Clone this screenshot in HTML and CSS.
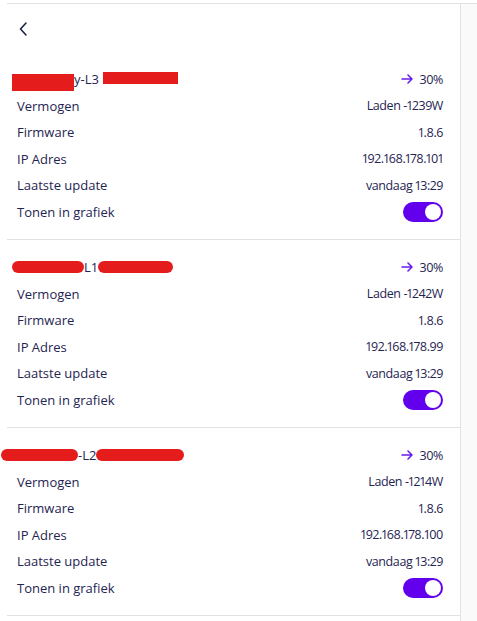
FILE: index.html
```html
<!DOCTYPE html>
<html lang="nl">
<head>
  <meta charset="UTF-8">
  <title>Omvormers</title>
  <link rel="stylesheet" href="styles.css">
</head>
<body>
  <div class="frame">
    <div class="main">
      <div class="header">
        <svg class="back" width="12" height="16" viewBox="0 0 12 16">
          <path d="M8 2 L2.5 8 L8 14" fill="none" stroke="#1c2340" stroke-width="1.6" stroke-linecap="round" stroke-linejoin="round"/>
        </svg>
      </div>

      <!-- L3 -->
      <div class="device">
        <div class="row title-row">
          <div class="name">
            <span class="redact r1a"></span><span class="name-text">y-L3</span><span class="redact r1b"></span>
          </div>
          <div class="soc">
            <svg width="13" height="12" viewBox="0 0 13 12"><path d="M1 6 H11 M7 2 L11 6 L7 10" fill="none" stroke="#6a1bf0" stroke-width="1.6" stroke-linecap="round" stroke-linejoin="round"/></svg>
            <span class="val">30%</span>
          </div>
        </div>
        <div class="row"><span>Vermogen</span><span class="val">Laden -1239W</span></div>
        <div class="row"><span>Firmware</span><span class="val">1.8.6</span></div>
        <div class="row"><span>IP Adres</span><span class="val">192.168.178.101</span></div>
        <div class="row"><span>Laatste update</span><span class="val">vandaag 13:29</span></div>
        <div class="row"><span>Tonen in grafiek</span><span class="toggle on"><span class="knob"></span></span></div>
      </div>

      <!-- L1 -->
      <div class="device">
        <div class="row title-row">
          <div class="name">
            <span class="redact pill r2a"></span><span class="name-text">L1</span><span class="redact pill r2b"></span>
          </div>
          <div class="soc">
            <svg width="13" height="12" viewBox="0 0 13 12"><path d="M1 6 H11 M7 2 L11 6 L7 10" fill="none" stroke="#6a1bf0" stroke-width="1.6" stroke-linecap="round" stroke-linejoin="round"/></svg>
            <span class="val">30%</span>
          </div>
        </div>
        <div class="row"><span>Vermogen</span><span class="val">Laden -1242W</span></div>
        <div class="row"><span>Firmware</span><span class="val">1.8.6</span></div>
        <div class="row"><span>IP Adres</span><span class="val">192.168.178.99</span></div>
        <div class="row"><span>Laatste update</span><span class="val">vandaag 13:29</span></div>
        <div class="row"><span>Tonen in grafiek</span><span class="toggle on"><span class="knob"></span></span></div>
      </div>

      <!-- L2 -->
      <div class="device">
        <div class="row title-row">
          <div class="name flush">
            <span class="redact pill r3a"></span><span class="name-text">-L2</span><span class="redact pill r3b"></span>
          </div>
          <div class="soc">
            <svg width="13" height="12" viewBox="0 0 13 12"><path d="M1 6 H11 M7 2 L11 6 L7 10" fill="none" stroke="#6a1bf0" stroke-width="1.6" stroke-linecap="round" stroke-linejoin="round"/></svg>
            <span class="val">30%</span>
          </div>
        </div>
        <div class="row"><span>Vermogen</span><span class="val">Laden -1214W</span></div>
        <div class="row"><span>Firmware</span><span class="val">1.8.6</span></div>
        <div class="row"><span>IP Adres</span><span class="val">192.168.178.100</span></div>
        <div class="row"><span>Laatste update</span><span class="val">vandaag 13:29</span></div>
        <div class="row"><span>Tonen in grafiek</span><span class="toggle on"><span class="knob"></span></span></div>
      </div>
    </div>
    <div class="side"></div>
  </div>
</body>
</html>
```

FILE: styles.css
```css
body {
  margin: 0;
  padding: 0;
  background: #fff;
  font-family: "Open Sans", sans-serif;
  font-size: 13px;
  color: #1f2552;
  overflow: hidden;
}
.frame {
  display: flex;
  margin: 3px 0 0 7px;
  border-top: 1px solid #e2e2e2;
  min-height: 640px;
}
.main {
  width: 453px;
}
.side {
  flex: 1;
  background: #fafafa;
  border-left: 1px solid #e2e2e2;
}
.header {
  height: 48px;
  display: flex;
  align-items: center;
  padding-left: 11px;
}
.back {
  margin-top: 2px;
}
.device {
  padding: 14px 17px 14px 10px;
  border-bottom: 1px solid #e2e2e2;
}
.row {
  height: 26.5px;
  display: flex;
  align-items: center;
  justify-content: space-between;
}
.val {
  font-size: 12.5px;
  letter-spacing: -0.4px;
  font-variant-numeric: proportional-nums;
}
.name {
  display: flex;
  align-items: center;
  margin-left: -5px;
}
.name.flush {
  margin-left: -16px;
}
.redact {
  display: inline-block;
  background: #e51c1c;
  height: 12px;
}
.redact.pill {
  border-radius: 6px;
}
.r1a { width: 62px; height: 17px; margin-top: 6px; }
.r1b { width: 75px; margin-left: 4px; margin-top: -2px; }
.r2a { width: 72px; }
.r2b { width: 75px; }
.r3a { width: 77px; }
.r3b { width: 88px; }
.soc {
  display: flex;
  align-items: center;
  gap: 5px;
}
.toggle {
  width: 40px;
  height: 20px;
  border-radius: 10px;
  background: #bbb;
  display: flex;
  align-items: center;
  padding: 0 2px;
  box-sizing: border-box;
}
.toggle.on {
  background: #6200ee;
  justify-content: flex-end;
}
.knob {
  width: 16px;
  height: 16px;
  border-radius: 50%;
  background: #fff;
}
```
